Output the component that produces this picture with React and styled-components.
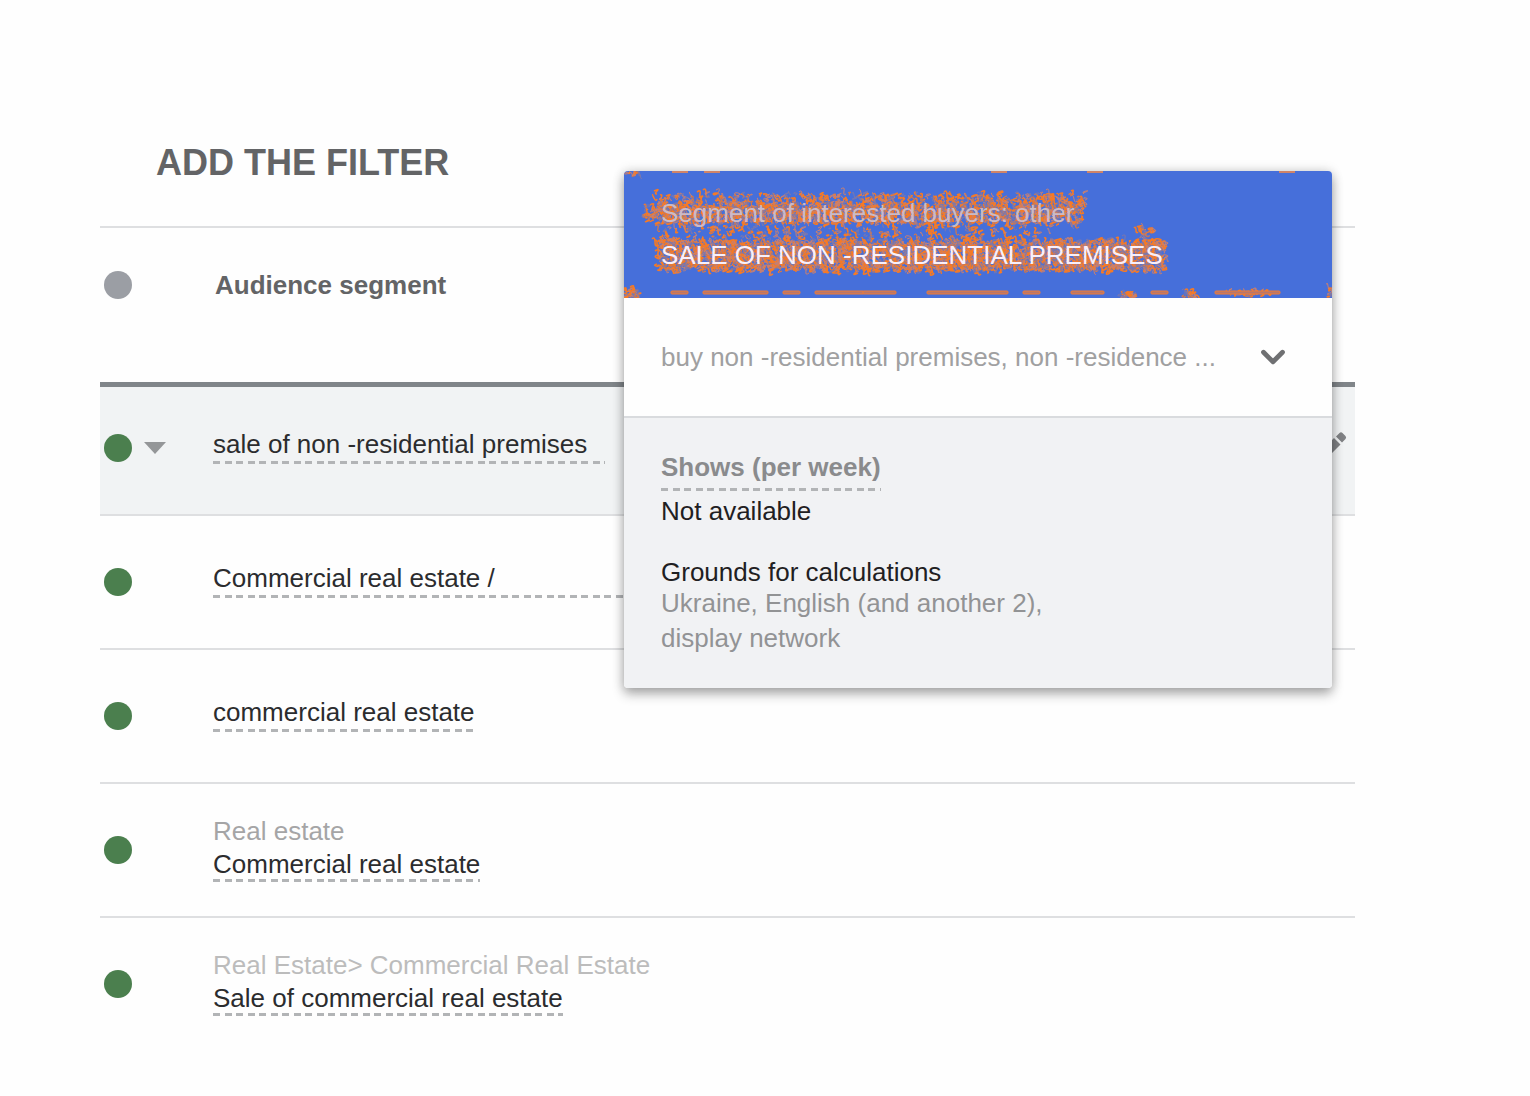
import { FiChevronDown } from 'react-icons/fi';
import styled, { createGlobalStyle, css } from 'styled-components';

const rows = [
  { id: 1, name: 'sale of non -residential premises', active: true, tail: 18 },
  { id: 2, name: 'Commercial real estate /', tail: 150 },
  { id: 3, name: 'commercial real estate' },
  { id: 4, parent: 'Real estate', name: 'Commercial real estate' },
  {
    id: 5,
    parent: 'Real Estate> Commercial Real Estate',
    name: 'Sale of commercial real estate',
    faded: true,
  },
];

// x, y, width, height and amount of the speckles in the card header
const patches = [
  [33, 23, 428, 12, 300],
  [34, 34, 424, 18, 900],
  [34, 70, 508, 29, 2100],
  [34, 54, 392, 14, 130],
  [20, 36, 14, 12, 16],
  [514, 56, 14, 14, 12],
  [1, 118, 14, 7, 20],
  [1, 1, 16, 1, 6],
  [497, 122, 14, 3, 14],
  [560, 122, 14, 3, 14],
  [605, 120, 45, 4, 22],
  [705, 117, 3, 8, 8],
];

const topBars = [[48, 16], [80, 16], [367, 16], [463, 16], [655, 16]];
const bottomBars = [
  [47, 17],
  [79, 65],
  [159, 17],
  [191, 49],
  [239, 33],
  [303, 81],
  [399, 17],
  [447, 33],
  [527, 17],
  [591, 65],
];

const makeSpeckles = (start, share) => {
  let seed = start;
  const random = () => {
    seed = (seed * 16807) % 2147483647;
    return seed / 2147483647;
  };

  return patches
    .map(([x, y, width, height, amount]) =>
      Array.from({ length: Math.round(amount * share) }, () => {
        const left = Math.round(x + random() * width);
        const top = Math.round(y + random() * height);
        const dx = Math.round(random() * 6 - 3);
        const dy = Math.round(random() * 6 - 3);
        return `M${left} ${top}q${dx} ${-dy} ${dy} ${dx}t${dx} ${dy}`;
      }).join('')
    )
    .join('');
};

const layers = [
  { color: '#f57a26', width: 1.6, path: makeSpeckles(11, 0.75) },
  { color: '#c98071', width: 1, path: makeSpeckles(2903, 0.5) },
  { color: '#7d78ab', width: 1, path: makeSpeckles(71233, 0.35) },
  { color: '#f57a26', width: 1, path: makeSpeckles(500113, 0.15) },
];

const Noise = () => (
  <NoiseLayer viewBox='0 0 708 127' aria-hidden='true'>
    {layers.map(({ color, width, path }, index) => (
      <path
        key={index}
        d={path}
        fill='none'
        stroke={color}
        strokeWidth={width}
      />
    ))}
    {topBars.map(([x, width]) => (
      <rect key={x} x={x} y='0' width={width} height='2' fill='#d08468' />
    ))}
    {bottomBars.map(([x, width]) => (
      <rect
        key={x}
        x={x}
        y='120'
        width={width}
        height='3'
        rx='1'
        fill='#b9766a'
        stroke='#f07c34'
      />
    ))}
  </NoiseLayer>
);

const SegmentCard = () => (
  <Card>
    <CardHeader>
      <Noise />
      <CardLabel>Segment of interested buyers: other</CardLabel>
      <CardTitle>SALE OF NON -RESIDENTIAL PREMISES</CardTitle>
    </CardHeader>
    <Keywords type='button' aria-expanded='false'>
      buy non -residential premises, non -residence ...
      <FiChevronDown size={38} strokeWidth={3} />
    </Keywords>
    <CardBody>
      <StatName>Shows (per week)</StatName>
      <StatValue>Not available</StatValue>
      <Grounds>Grounds for calculations</Grounds>
      <GroundsText>
        Ukraine, English (and another 2),
        <br />
        display network
      </GroundsText>
    </CardBody>
  </Card>
);

const App = () => {
  return (
    <Page>
      <GlobalStyle />
      <Title>ADD THE FILTER</Title>
      <TableWrap>
        <Table>
          <thead>
            <tr>
              <HeadCell $narrow>
                <Dot $off />
              </HeadCell>
              <HeadCell>Audience segment</HeadCell>
              <HeadCell />
            </tr>
          </thead>
          <tbody>
            {rows.map((row) => (
              <Row key={row.id} $active={row.active}>
                <td>
                  <Status>
                    <Dot />
                    {row.active && (
                      <IconButton type='button' aria-label='Change status'>
                        <svg width='22' height='12' viewBox='0 0 22 12'>
                          <path d='M0 0h22L11 12z' fill='#949698' />
                        </svg>
                      </IconButton>
                    )}
                  </Status>
                </td>
                <NameCell>
                  {row.parent && (
                    <Parent $faded={row.faded}>{row.parent}</Parent>
                  )}
                  <Name href='#segment' $tail={row.tail} $tight={row.parent}>
                    {row.name}
                  </Name>
                </NameCell>
                <ActionCell>
                  {row.active && (
                    <IconButton type='button' aria-label='Edit segment'>
                      <svg width='28' height='34' viewBox='0 0 28 34'>
                        <path
                          d='M17 5.500l3.500-3.500q1.500-1.300 3 0l3 3q1.300 1.500 0 3L23 11.500zM15 7l6.500 6.500L7 28H1v-7z'
                          fill='#808285'
                        />
                      </svg>
                    </IconButton>
                  )}
                </ActionCell>
              </Row>
            ))}
          </tbody>
        </Table>
        <SegmentCard />
      </TableWrap>
    </Page>
  );
};

const GlobalStyle = createGlobalStyle`
  * {
    box-sizing: border-box;
  }

  body {
    margin: 0;
    background: #fefefe;
    font-family: 'Liberation Sans', Arial, sans-serif;
    font-size: 26px;
    line-height: 30px;
    color: #2b2c2e;
  }
`;

const dashes = css`
  background: repeating-linear-gradient(
      90deg,
      #b2b4b6 0 7px,
      transparent 7px 12px,
      #b2b4b6 12px 19px,
      transparent 19px 23px
    )
    left bottom / 100% 3px no-repeat;
`;

const Page = styled.main`
  padding: 143px 175px 40px 100px;
`;

const Title = styled.h1`
  margin: 0 0 43px;
  padding-left: 56px;
  font-size: 36px;
  line-height: 40px;
  color: #636466;
`;

const TableWrap = styled.div`
  position: relative;
`;

const Table = styled.table`
  width: 100%;
  border-spacing: 0;
  border-top: 2px solid #dedfe1;
`;

const HeadCell = styled.th`
  width: ${({ $narrow }) => ($narrow ? '113px' : 'auto')};
  height: 154px;
  padding: 0 0 40px ${({ $narrow }) => ($narrow ? '4px' : '2px')};
  text-align: left;
  color: #636466;
`;

const Row = styled.tr`
  td {
    height: 134px;
    padding: 0;
    border-bottom: 2px solid #dedfe1;
    ${({ $active }) =>
      $active &&
      css`
        background: #f1f3f4;
        box-shadow: inset 0 5px #808589;
      `}
  }

  &:last-child td {
    border-bottom-color: transparent;
  }
`;

const Status = styled.div`
  display: flex;
  align-items: center;
  gap: 12px;
  padding-left: 4px;
`;

const Dot = styled.span`
  display: block;
  width: 28px;
  height: 28px;
  border-radius: 50%;
  background: ${({ $off }) => ($off ? '#9b9ea4' : '#4b7f4e')};
`;

const IconButton = styled.button`
  display: flex;
  padding: 0;
  border: 0;
  background: none;
  cursor: pointer;
`;

const NameCell = styled.td`
  && {
    padding-bottom: 4px;
  }
`;

const Parent = styled.div`
  line-height: 35px;
  color: ${({ $faded }) => ($faded ? '#bcbcbc' : '#a5a5a6')};
`;

const Name = styled.a`
  display: inline-block;
  padding-right: ${({ $tail = 0 }) => $tail}px;
  padding-bottom: ${({ $tight }) => ($tight ? 3 : 5)}px;
  vertical-align: top;
  white-space: nowrap;
  color: inherit;
  text-decoration: none;
  ${dashes}
`;

const ActionCell = styled.td`
  width: 36px;
`;

const Card = styled.section`
  position: absolute;
  top: -55px;
  right: 23px;
  width: 708px;
  border-radius: 4px;
  background: #fefefe;
  box-shadow: 0 6px 12px rgba(0, 0, 0, 0.3), 0 0 12px rgba(0, 0, 0, 0.16);
  overflow: hidden;
`;

const CardHeader = styled.header`
  position: relative;
  padding: 27px 36px 28px 37px;
  background: #466fda;
`;

const NoiseLayer = styled.svg`
  position: absolute;
  top: 0;
  left: 0;
  width: 100%;
  height: 100%;
`;

const CardLabel = styled.p`
  position: relative;
  margin: 0 0 12px;
  color: #cbbac6;
`;

const CardTitle = styled.h2`
  position: relative;
  margin: 0;
  font-size: 26px;
  font-weight: 400;
  color: #f8effa;
`;

const Keywords = styled.button`
  display: flex;
  align-items: center;
  justify-content: space-between;
  width: 100%;
  height: 120px;
  padding: 0 40px 0 37px;
  border: 0;
  border-bottom: 2px solid #d9dbde;
  background: none;
  font: inherit;
  color: #a0a0a1;
  cursor: pointer;

  svg {
    color: #6f7072;
  }
`;

const CardBody = styled.div`
  padding: 34px 36px 32px 37px;
  background: #f1f2f4;
`;

const StatName = styled.h3`
  display: table;
  margin: 0 0 5px;
  padding-bottom: 9px;
  font-size: 26px;
  color: #8a8b8d;
  ${dashes}
`;

const StatValue = styled.p`
  margin: 0 0 32px;
  color: #1f2022;
`;

const Grounds = styled.h3`
  margin: 0;
  font-size: 26px;
  font-weight: 400;
  line-height: 28px;
  color: #1f2022;
`;

const GroundsText = styled.p`
  margin: 0;
  line-height: 35px;
  color: #929395;
`;

export default App;
